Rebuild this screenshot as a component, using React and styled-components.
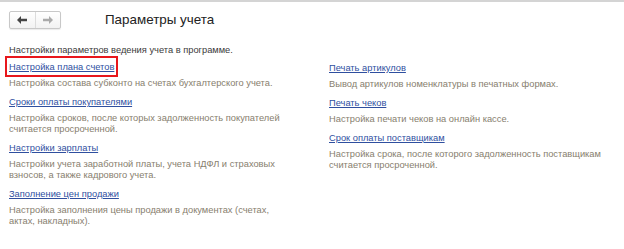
import React from 'react'
import styled, { createGlobalStyle } from 'styled-components'

const Global = createGlobalStyle`
  body {
    margin: 0;
    background: #fff;
    font-family: "Liberation Sans", Arial, sans-serif;
  }
`

const Page = styled.div`
  width: 624px;
  height: 249px;
  overflow: hidden;
  border-top: 2px solid #d4d4d4;
  box-sizing: border-box;
`

const Header = styled.div`
  display: flex;
  align-items: center;
  padding: 8px 0 0 9px;
  height: 20px;
`

const NavGroup = styled.div`
  display: flex;
  width: 52px;
  height: 18px;
  border: 1px solid #c8c8c8;
  border-radius: 2px;
  box-sizing: border-box;
  background: linear-gradient(#fff, #f2f2f2);
  box-shadow: 0 1px 1px rgba(0, 0, 0, 0.08);
`

const NavButton = styled.div`
  flex: 1;
  display: flex;
  align-items: center;
  justify-content: center;
  & + & {
    border-left: 1px solid #dcdcdc;
  }
`

const Title = styled.div`
  margin-left: 44px;
  font-size: 13.4px;
  color: #222;
  line-height: 20px;
`

const Intro = styled.div`
  margin: 15px 0 0 9px;
  font-size: 9.3px;
  line-height: 11px;
  color: #3a3a3a;
`

const Columns = styled.div`
  display: grid;
  grid-template-columns: 320px 1fr;
  padding-left: 9px;
  margin-top: 6px;
`

const Column = styled.div`
  display: flex;
  flex-direction: column;
  gap: 8px;
  padding-top: ${p => p.top || 0}px;
`

const Item = styled.div`
  display: flex;
  flex-direction: column;
  align-items: flex-start;
  gap: 5px;
  font-size: 9.3px;
  line-height: 11px;
`

const LinkText = styled.a`
  color: #2f4f9f;
  text-decoration: underline;
  position: relative;
  ${p => p.marked && `
    &::after {
      content: '';
      position: absolute;
      left: -4px;
      top: -6px;
      right: -4px;
      bottom: -4px;
      border: 2px solid #e8171c;
    }
  `}
`

const Desc = styled.div`
  color: #877e6e;
  width: ${p => p.w || 300}px;
`

const Arrow = ({ dir, color }) => (
  <svg width="10" height="8" viewBox="0 0 10 8">
    <path
      d={dir === 'left' ? 'M0 4 L4 0 L4 2.8 L10 2.8 L10 5.2 L4 5.2 L4 8 Z' : 'M10 4 L6 0 L6 2.8 L0 2.8 L0 5.2 L6 5.2 L6 8 Z'}
      fill={color}
    />
  </svg>
)

const left = [
  { title: 'Настройка плана счетов', desc: 'Настройка состава субконто на счетах бухгалтерского учета.', marked: true },
  { title: 'Сроки оплаты покупателями', desc: 'Настройка сроков, после которых задолженность покупателей считается просроченной.', w: 280 },
  { title: 'Настройки зарплаты', desc: 'Настройки учета заработной платы, учета НДФЛ и страховых взносов, а также кадрового учета.', w: 280 },
  { title: 'Заполнение цен продажи', desc: 'Настройка заполнения цены продажи в документах (счетах, актах, накладных).', w: 280 },
]

const right = [
  { title: 'Печать артикулов', desc: 'Вывод артикулов номенклатуры в печатных формах.' },
  { title: 'Печать чеков', desc: 'Настройка печати чеков на онлайн кассе.' },
  { title: 'Срок оплаты поставщикам', desc: 'Настройка срока, после которого задолженность поставщикам считается просроченной.', w: 285 },
]

const renderItem = it => (
  <Item key={it.title}>
    <LinkText href="#" marked={it.marked} onClick={e => e.preventDefault()}>{it.title}</LinkText>
    <Desc w={it.w}>{it.desc}</Desc>
  </Item>
)

export default function App() {
  return (
    <Page>
      <Global />
      <Header>
        <NavGroup>
          <NavButton><Arrow dir="left" color="#444" /></NavButton>
          <NavButton><Arrow dir="right" color="#aaa" /></NavButton>
        </NavGroup>
        <Title>Параметры учета</Title>
      </Header>
      <Intro>Настройки параметров ведения учета в программе.</Intro>
      <Columns>
        <Column>{left.map(renderItem)}</Column>
        <Column top={1}>{right.map(renderItem)}</Column>
      </Columns>
    </Page>
  )
}
